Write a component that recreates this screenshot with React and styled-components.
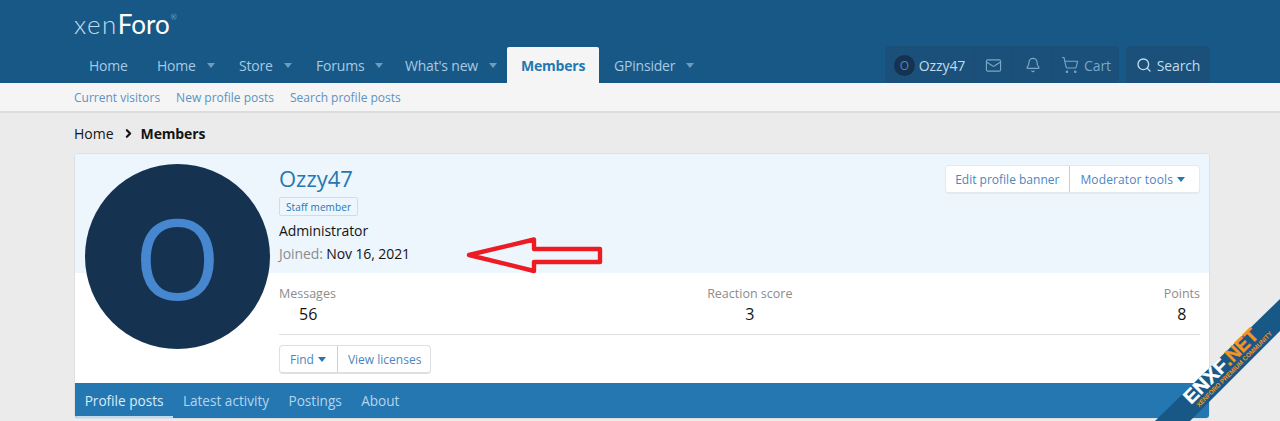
import React from 'react';
import styled, { createGlobalStyle } from 'styled-components';
import { Mail, Bell, ShoppingCart, Search, ChevronRight } from 'lucide-react';

const GlobalStyle = createGlobalStyle`
  html, body {
    margin: 0;
    height: 421px;
    overflow: hidden;
    background: #ebebeb;
    font-family: "Open Sans", "Noto Sans", sans-serif;
    font-size: 14px;
    color: #141414;
  }
  * { box-sizing: border-box; }
`;

const navItems = [
  { label: 'Home', width: 69, pad: 15 },
  { label: 'Home', width: 82, caret: true },
  { label: 'Store', width: 77, caret: true },
  { label: 'Forums', width: 89, caret: true },
  { label: "What's new", width: 116, caret: true },
  { label: 'Members', width: 92, active: true },
  { label: 'GPinsider', width: 110, caret: true, pad: 15 },
];

const App = () => {
  return (
    <Page>
      <GlobalStyle />
      <Header>
        <Logo>xen<b>Foro</b><sup>®</sup></Logo>
        <NavRow>
          <Nav>
            {navItems.map((item, i) => (
              <NavItem key={i} $active={item.active} $width={item.width} $pad={item.pad}>
                {item.label}
                {item.caret && <NavCaret />}
              </NavItem>
            ))}
          </Nav>
          <NavTools>
            <ToolGroup>
              <Tool $width={90} $gap={4} $bright>
                <MiniAvatar>O</MiniAvatar>
                Ozzy47
              </Tool>
              <Tool $width={38}><Mail size={17} strokeWidth={1.6} /></Tool>
              <Tool $width={40}><Bell size={16} strokeWidth={1.8} /></Tool>
              <Tool $width={66} $last>
                <ShoppingCart size={18} strokeWidth={1.5} />
                Cart
              </Tool>
            </ToolGroup>
            <ToolGroup>
              <Tool $width={84} $last $bright>
                <Search size={16} strokeWidth={2} />
                Search
              </Tool>
            </ToolGroup>
          </NavTools>
        </NavRow>
      </Header>

      <SubNav>
        <SubLink>Current visitors</SubLink>
        <SubLink>New profile posts</SubLink>
        <SubLink>Search profile posts</SubLink>
      </SubNav>

      <Body>
        <Crumbs>
          <span>Home</span>
          <ChevronRight size={13} strokeWidth={4} />
          <b>Members</b>
        </Crumbs>

        <Card>
          <BigAvatar>O</BigAvatar>
          <Banner>
            <BannerInfo>
              <Name>Ozzy47</Name>
              <Badge>Staff member</Badge>
              <RoleLine>Administrator</RoleLine>
              <RoleLine $spaced><Muted>Joined:</Muted> Nov 16, 2021</RoleLine>
            </BannerInfo>
            <ButtonGroup $raised>
              <GroupButton $left={9} $right={10}>Edit profile banner</GroupButton>
              <GroupButton $left={10} $right={14} $spacing={0.13}>Moderator tools<Caret /></GroupButton>
            </ButtonGroup>
            <Arrow viewBox="0 0 140 40" width="140" height="40">
              <polygon
                points="5,20 70,4.5 70,14 136,14 136,27 70,27 70,36"
                fill="none"
                stroke="#ed1c24"
                strokeWidth="4.4"
                strokeLinejoin="round"
              />
            </Arrow>
          </Banner>

          <Stats>
            <StatRow>
              <Stat $align="left">
                <StatLabel>Messages</StatLabel>
                <StatValue $indent={20}>56</StatValue>
              </Stat>
              <Stat $align="center">
                <StatLabel>Reaction score</StatLabel>
                <StatValue>3</StatValue>
              </Stat>
              <Stat $align="right">
                <StatLabel>Points</StatLabel>
                <StatValue>8</StatValue>
              </Stat>
            </StatRow>
            <Actions>
              <ButtonGroup>
                <GroupButton $left={10} $right={11}>Find<Caret /></GroupButton>
                <GroupButton $left={10} $right={9}>View licenses</GroupButton>
              </ButtonGroup>
            </Actions>
          </Stats>

          <Tabs>
            <Tab $active>Profile posts</Tab>
            <Tab>Latest activity</Tab>
            <Tab>Postings</Tab>
            <Tab>About</Tab>
          </Tabs>
        </Card>
      </Body>

      <Ribbon viewBox="0 0 130 130" width="130" height="130">
        <polygon points="130,8 5,130 40,130 130,40" fill="#185886" />
        <g transform="translate(41 114) rotate(-45)">
          <BannerText x="0" y="0" fontSize="19" fill="#fff" stroke="#fff" textLength="54" lengthAdjust="spacingAndGlyphs">ENXF</BannerText>
          <BannerText x="54" y="0" fontSize="19" fill="#f7941d" stroke="#f7941d" textLength="43" lengthAdjust="spacingAndGlyphs">.NET</BannerText>
          <BannerText x="4" y="7.5" fontSize="6.5" fill="#f7941d" textLength="104" lengthAdjust="spacingAndGlyphs">XENFORO PREMIUM COMMUNITY</BannerText>
        </g>
      </Ribbon>
    </Page>
  );
};

const Page = styled.div`
  position: relative;
  height: 421px;
  overflow: hidden;
`;

const Header = styled.header`
  background: #185886;
  height: 83px;
  padding: 0 70px 0 74px;
  display: flex;
  flex-direction: column;
`;

const Logo = styled.div`
  height: 47px;
  padding-top: 7px;
  font-family: "Lato", sans-serif;
  font-weight: 300;
  font-size: 26px;
  line-height: 34px;
  color: #c3dbec;
  letter-spacing: 1.4px;
  b {
    font-weight: 400;
    color: #fff;
    letter-spacing: 0;
  }
  sup {
    font-size: 7px;
    line-height: 0;
    vertical-align: 14px;
    margin-left: 1px;
  }
`;

const NavRow = styled.div`
  display: flex;
  justify-content: space-between;
  height: 36px;
`;

const Nav = styled.nav`
  display: flex;
`;

const NavItem = styled.div`
  width: ${props => props.$width}px;
  padding-left: ${props => props.$pad || 14}px;
  display: flex;
  align-items: center;
  white-space: nowrap;
  font-size: 14px;
  letter-spacing: -0.2px;
  font-weight: ${props => (props.$active ? 700 : 400)};
  color: ${props => (props.$active ? '#2577b1' : '#a5cae4')};
  background: ${props => (props.$active ? '#f5f5f5' : 'transparent')};
  border-radius: ${props => (props.$active ? '2px 2px 0 0' : '0')};
`;

const NavCaret = styled.i`
  width: 0;
  height: 0;
  margin-left: 11px;
  border-left: 4.5px solid transparent;
  border-right: 4.5px solid transparent;
  border-top: 5px solid #6a9dc2;
`;

const NavTools = styled.div`
  display: flex;
  gap: 7px;
  margin-top: -1px;
  height: 37px;
`;

const ToolGroup = styled.div`
  display: flex;
  background: #1a5079;
  border-radius: 4px 4px 0 0;
`;

const Tool = styled.div`
  width: ${props => props.$width}px;
  padding-top: 1px;
  display: flex;
  align-items: center;
  justify-content: center;
  gap: ${props => props.$gap || 5}px;
  font-size: 14px;
  letter-spacing: -0.1px;
  color: ${props => (props.$bright ? '#c2dcee' : '#7ba7c7')};
  border-right: ${props => (props.$last ? 'none' : '1px solid #1b4c72')};
`;

const MiniAvatar = styled.span`
  width: 21px;
  height: 21px;
  border-radius: 50%;
  background: #153351;
  color: #4687cf;
  font-size: 12px;
  display: flex;
  align-items: center;
  justify-content: center;
`;

const SubNav = styled.div`
  height: 30px;
  padding-left: 74px;
  display: flex;
  align-items: center;
  gap: 16px;
  background: #f5f5f5;
  border-bottom: 2px solid #dcdcdc;
`;

const SubLink = styled.span`
  font-size: 12px;
  color: #5c92c4;
`;

const Body = styled.main`
  padding: 0 70px 0 74px;
`;

const Crumbs = styled.div`
  height: 40px;
  display: flex;
  align-items: center;
  gap: 6px;
  font-size: 14px;
  color: #141414;
  span { margin-right: 2px; }
  b { letter-spacing: -0.15px; }
`;

const Card = styled.section`
  position: relative;
  height: 266px;
  border: 1px solid #dfdfdf;
  border-radius: 4px;
  background: #fff;
  overflow: hidden;
`;

const BigAvatar = styled.div`
  position: absolute;
  z-index: 1;
  left: 10px;
  top: 10px;
  width: 185px;
  height: 185px;
  border-radius: 50%;
  background: #153351;
  color: #4687cf;
  font-size: 111px;
  display: flex;
  align-items: center;
  justify-content: center;
`;

const Banner = styled.div`
  position: relative;
  height: 119px;
  padding: 9px 9px 0 204px;
  background: #edf6fd;
  display: flex;
  justify-content: space-between;
  align-items: flex-start;
`;

const BannerInfo = styled.div`
  display: flex;
  flex-direction: column;
  align-items: flex-start;
`;

const Name = styled.h1`
  margin: 0;
  font-size: 22px;
  font-weight: 400;
  line-height: 30px;
  color: #2577b1;
`;

const Badge = styled.span`
  margin-top: 4px;
  height: 19px;
  padding: 0 6px;
  display: flex;
  align-items: center;
  font-size: 10px;
  letter-spacing: 0.1px;
  color: #2577b1;
  background: #edf6fd;
  border: 1px solid #c5e0f5;
  border-radius: 2px;
`;

const RoleLine = styled.div`
  margin-top: ${props => (props.$spaced ? '4px' : '5px')};
  line-height: 19px;
  font-size: 14px;
  letter-spacing: -0.1px;
`;

const Muted = styled.span`
  color: #8c8c8c;
`;

const ButtonGroup = styled.div`
  display: inline-flex;
  height: 29px;
  background: #fff;
  border: 1px solid #dfdfdf;
  border-bottom-width: 2px;
  border-radius: 4px;
  ${props => props.$raised && 'border-color: #e4e9ee; margin-top: 2px;'}
`;

const GroupButton = styled.span`
  display: flex;
  align-items: center;
  padding: 0 ${props => props.$right}px 0 ${props => props.$left}px;
  font-size: 12px;
  letter-spacing: ${props => props.$spacing || 0}px;
  color: #4a86bf;
  white-space: nowrap;
  & + & { border-left: 1px solid #cfcfcf; }
`;

const Caret = styled.i`
  width: 0;
  height: 0;
  margin-left: 4px;
  border-left: 4.5px solid transparent;
  border-right: 4.5px solid transparent;
  border-top: 5px solid #2577b1;
`;

const Arrow = styled.svg`
  position: absolute;
  left: 389px;
  top: 81px;
`;

const Stats = styled.div`
  height: 110px;
  padding: 12px 9px 0 204px;
`;

const StatRow = styled.div`
  height: 50px;
  display: flex;
  justify-content: space-between;
  border-bottom: 1px solid #dfdfdf;
`;

const Stat = styled.div`
  text-align: ${props => props.$align};
`;

const StatLabel = styled.div`
  font-size: 12.5px;
  line-height: 18px;
  color: #8c8c8c;
`;

const StatValue = styled.div`
  font-size: 16px;
  line-height: 22px;
  padding-left: ${props => props.$indent || 0}px;
  text-align: ${props => (props.$indent ? 'left' : 'center')};
`;

const Actions = styled.div`
  padding-top: 10px;
`;

const Tabs = styled.nav`
  height: 36px;
  background: #2577b1;
  display: flex;
`;

const Tab = styled.div`
  padding: 2px 9.7px 0;
  display: flex;
  align-items: center;
  font-size: 13.6px;
  color: ${props => (props.$active ? '#dcebf6' : '#b4d5ee')};
  border-bottom: 3px solid ${props => (props.$active ? '#bbdcf3' : 'transparent')};
`;

const Ribbon = styled.svg`
  position: absolute;
  right: 0;
  bottom: 0;
`;

const BannerText = styled.text`
  font-family: "Liberation Sans", sans-serif;
  font-weight: 700;
  stroke-width: 0.4px;
`;

export default App;
